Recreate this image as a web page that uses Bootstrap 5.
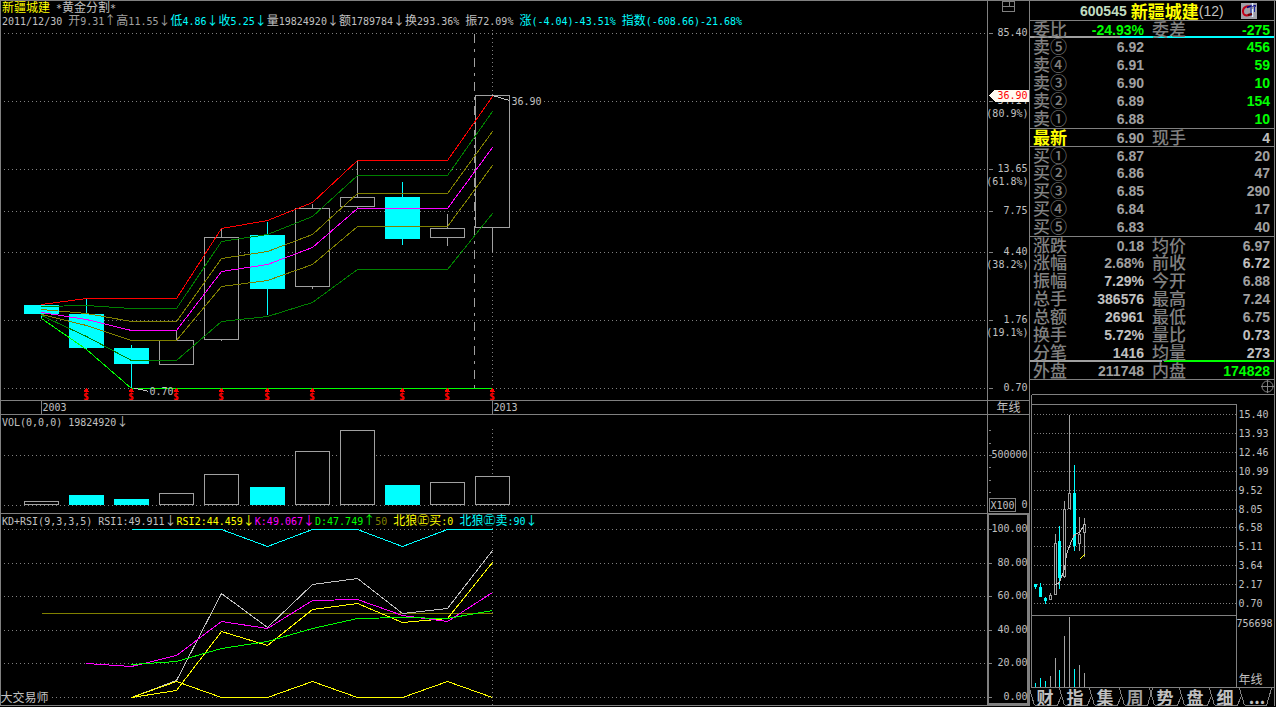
<!DOCTYPE html>
<html lang="zh-CN" data-bs-theme="dark">
<head>
<meta charset="utf-8">
<meta name="viewport" content="width=device-width, initial-scale=1">
<title>新疆城建 600545 年线</title>
<link href="https://cdn.jsdelivr.net/npm/bootstrap@5.3.0/dist/css/bootstrap.min.css" rel="stylesheet">
<style>
:root{--line:#808080;--txt:#c0c0c0;--dim:#a0a0a0;--up:#00ff00;--cy:#00ffff}
body{background:#000;color:var(--txt);font:10px/12px "DejaVu Sans Mono","Noto Sans CJK SC",monospace}
.cjk{font:12px/12px "Noto Sans CJK SC",sans-serif}
.edge-t{border-top:1px solid var(--line)}
.edge-l{border-left:1px solid var(--line)}
.edge-b{border-bottom:1px solid var(--line)}
.edge-r{border-right:1px solid var(--line)}
.axis-col{width:42px;flex:none}
.side-col{width:247px;flex:none}
.side-in{width:245px}
.head-row{height:14px;padding-left:1px;white-space:pre;line-height:12px}
.head-title{height:13px}
svg{display:block;width:100%}
svg text{fill:var(--txt);font:10px "DejaVu Sans Mono",monospace;white-space:pre}
svg text .cjk,svg text.cjk{font:12px "Noto Sans CJK SC",sans-serif}
.axis-col svg{overflow:visible}
.h-price{height:372px}.h-price-axis{height:399px}
.h-date{height:13px}
.h-vol{height:84px}.h-vol-axis{height:98px}
.h-kd{height:177px}.h-kd-axis{height:191px}
.kd-axis{border:2px solid var(--line);border-top-width:1px}
.c-y{color:#ffff00}.c-c{color:var(--cy)}.c-m{color:#ff00ff}.c-g{color:var(--up)}.c-o{color:#808000}.c-d{color:var(--dim)}
.stock-head{height:19px;font:bold 14px/18px "Liberation Sans",Arial,sans-serif;padding-left:50px}
.stock-head h1{font:bold 17px/18px "Noto Sans CJK SC",sans-serif;margin:0 0 0 4px;color:#ffff00}
.code{color:#c0dcc0}
.logo{width:16px;height:16px;margin-left:17px}
.quote{width:100%;border-collapse:separate;border-spacing:0;table-layout:fixed;font:bold 14px/16px "Liberation Sans",Arial,sans-serif}
.quote tr{height:18px}
.quote th,.quote td{padding:0;height:18px;line-height:16px;vertical-align:middle}
.quote th{font:500 17px/14px "Noto Sans CJK SC",sans-serif;color:var(--line);white-space:nowrap;padding:0 0 2px 3px}
.quote td{text-align:right}
.quote td+th{padding-left:8px}
.quote td:last-child{padding-right:4px}
.quote tr.ruled>*{border-top:1px solid var(--line)}
.quote tr.closing>*{border-bottom:1px solid var(--line)}
.quote td.lo{color:var(--dim)}.quote td.dn{color:var(--up)}
.quote th.hot{color:#ffff00;font-weight:700}
.bar-ask{background:linear-gradient(90deg,var(--dim) 37%,var(--cy) 37%) bottom/100% 2px no-repeat}
.bar-vol{background:linear-gradient(90deg,var(--dim) 54%,#000 54%,#000 55%,var(--up) 55%) bottom/100% 2px no-repeat}
.target-strip{height:14px}
.target-strip svg{width:13px;height:13px}
.h-mini{height:293px}
.tab-strip{height:19px}
.tab-strip>svg{height:19px;left:0;top:0}
.tab-strip button{width:30px;padding:0;border:0;background:none;color:var(--txt);font:bold 17px/17px "Noto Sans CJK SC",sans-serif;position:relative}
.tab-strip button.on{color:var(--dim)}
.tab-strip button.more{width:34px}
</style>
</head>
<body>
<div class="d-flex min-vh-100 align-items-start">
  <main class="flex-grow-1 edge-l edge-t edge-b" style="min-width:0">
    <section class="d-flex">
      <div class="flex-grow-1 overflow-hidden">
        <div class="head-row head-title"><span class="cjk c-y">新疆城建</span> *<span class="cjk">黄金分割</span>*</div>
        <div class="head-row">2011/12/30 <span class="c-d"><span class="cjk">开</span>9.31<span class="cjk">↑高</span>11.55<span class="cjk">↓</span></span><span class="c-c"><span class="cjk">低</span>4.86<span class="cjk">↓收</span>5.25<span class="cjk">↓</span></span><span class="cjk">量</span>19824920<span class="cjk">↓额</span>1789784<span class="cjk">↓换</span>293.36% <span class="cjk">振</span>72.09% <span class="c-c"><span class="cjk">涨</span>(-4.04)-43.51% <span class="cjk">指数</span>(-608.66)-21.68%</span></div>
        <svg class="h-price" id="price"></svg>
      </div>
      <div class="axis-col edge-l"><svg class="h-price-axis" id="priceAxis"></svg></div>
    </section>
    <section class="d-flex edge-t">
      <div class="flex-grow-1 overflow-hidden"><svg class="h-date" id="dates"></svg></div>
      <div class="axis-col edge-l text-center cjk h-date">年线</div>
    </section>
    <section class="d-flex edge-t">
      <div class="flex-grow-1 overflow-hidden">
        <div class="head-row">VOL(0,0,0) 19824920<span class="cjk">↓</span></div>
        <svg class="h-vol" id="vol"></svg>
      </div>
      <div class="axis-col edge-l"><svg class="h-vol-axis" id="volAxis"></svg></div>
    </section>
    <section class="d-flex edge-t">
      <div class="flex-grow-1 overflow-hidden">
        <div class="head-row">KD+RSI(9,3,3,5) RSI1:49.911<span class="cjk">↓</span><span class="c-y">RSI2:44.459<span class="cjk">↓</span></span><span class="c-m">K:49.067<span class="cjk">↓</span></span><span class="c-g">D:47.749<span class="cjk">↑</span></span><span class="c-o">50</span> <span class="c-y"><span class="cjk">北狼㊣买</span>:0</span> <span class="c-c"><span class="cjk">北狼㊣卖</span>:90<span class="cjk">↓</span></span></div>
        <svg class="h-kd" id="kd"></svg>
      </div>
      <div class="axis-col kd-axis h-kd-axis"><svg class="h-100" id="kdAxis"></svg></div>
    </section>
  </main>

  <aside class="side-col edge-l edge-t">
    <div class="side-in edge-r">
      <div class="stock-head d-flex align-items-center">
        <span class="code">600545</span><h1>新疆城建</h1><span class="fw-normal">(12)</span>
        <svg class="logo" viewBox="0 0 16 16" aria-hidden="true"><rect width="16" height="16" fill="#a0a0a8"/><path d="M9 3.500C5 2.500 1.500 5 2 9s4 4 7 2.500" fill="none" stroke="#c00018" stroke-width="2"/><path d="M6 4.500l5-2 4 .5" fill="none" stroke="#000080" stroke-width="1.500"/><path d="M11.500 0v3M11.500 6v8" stroke="#e0f0ff" stroke-width="1.500"/><path d="M10 4v9M13.500 4v5" stroke="#1020a0"/><path d="M7 12l4-1" stroke="#660000" stroke-width="2"/></svg>
      </div>
      <table class="quote">
        <colgroup><col style="width:40px"><col style="width:74px"><col style="width:48px"><col></colgroup>
        <tbody>
        <tr class="ruled bar-ask"><th>委比</th><td class="dn">-24.93%</td><th>委差</th><td class="dn">-275</td></tr>
        <tr><th>卖⑤</th><td class="lo">6.92</td><td colspan="2" class="dn">456</td></tr>
        <tr><th>卖④</th><td class="lo">6.91</td><td colspan="2" class="dn">59</td></tr>
        <tr><th>卖③</th><td class="lo">6.90</td><td colspan="2" class="dn">10</td></tr>
        <tr><th>卖②</th><td class="lo">6.89</td><td colspan="2" class="dn">154</td></tr>
        <tr><th>卖①</th><td class="lo">6.88</td><td colspan="2" class="dn">10</td></tr>
        <tr class="ruled"><th class="hot">最新</th><td class="lo">6.90</td><th>现手</th><td>4</td></tr>
        <tr class="ruled"><th>买①</th><td class="lo">6.87</td><td colspan="2" class="lo">20</td></tr>
        <tr><th>买②</th><td class="lo">6.86</td><td colspan="2" class="lo">47</td></tr>
        <tr><th>买③</th><td class="lo">6.85</td><td colspan="2" class="lo">290</td></tr>
        <tr><th>买④</th><td class="lo">6.84</td><td colspan="2" class="lo">17</td></tr>
        <tr><th>买⑤</th><td class="lo">6.83</td><td colspan="2" class="lo">40</td></tr>
        <tr class="ruled"><th>涨跌</th><td class="lo">0.18</td><th>均价</th><td class="lo">6.97</td></tr>
        <tr><th>涨幅</th><td class="lo">2.68%</td><th>前收</th><td>6.72</td></tr>
        <tr><th>振幅</th><td>7.29%</td><th>今开</th><td class="lo">6.88</td></tr>
        <tr><th>总手</th><td>386576</td><th>最高</th><td class="lo">7.24</td></tr>
        <tr><th>总额</th><td>26961</td><th>最低</th><td class="lo">6.75</td></tr>
        <tr><th>换手</th><td>5.72%</td><th>量比</th><td>0.73</td></tr>
        <tr class="bar-vol"><th>分笔</th><td>1416</th><th>均量</th><td>273</td></tr>
        <tr class="closing"><th>外盘</th><td class="lo">211748</td><th>内盘</th><td class="dn">174828</td></tr>
        </tbody>
      </table>
      <div class="target-strip d-flex justify-content-end"><svg viewBox="0 0 13 13" aria-hidden="true"><circle cx="6.5" cy="6.5" r="5.5" fill="none" stroke="#808080"/><path d="M6.500 0v13M0 6.500h13" stroke="#808080"/></svg></div>
      <svg class="h-mini" id="mini"></svg>
      <nav class="tab-strip d-flex position-relative">
        <svg class="position-absolute" id="tabs" aria-hidden="true"></svg>
        <button>财</button><button>指</button><button>集</button><button class="on">周</button><button>势</button><button>盘</button><button>细</button><button class="more">...</button>
      </nav>
    </div>
  </aside>
</div>
<script src="https://cdn.jsdelivr.net/npm/bootstrap@5.3.0/dist/js/bootstrap.bundle.min.js"></script>
<script>
const G='#808080',H='#a0a0a0',C='#00ffff',W='#c0c0c0',Y='#ffff00',M='#ff00ff',L='#00ff00',D='#008000',O='#808000',R='#ff0000';
const years=[41,86,131,176,221,267,312,357,402,447,492];
// Each panel draws in shared screen units; ox, oy is the panel's own origin.
function panel(id,ox,oy,body){
  document.getElementById(id).innerHTML='<g shape-rendering="crispEdges" transform="translate('+(0.5-ox)+','+(0.5-oy)+')">'+body+'</g>';
}
const line=(x1,y1,x2,y2,c=G,x='')=>`<line x1="${x1}" y1="${y1}" x2="${x2}" y2="${y2}" stroke="${c}" ${x}/>`;
const dotH=(y,x1=4,x2=4000,d='1 3')=>line(x1-.5,y,x2,y,G,`stroke-dasharray="${d}"`);
const dotV=(x,y1,y2)=>line(x,y1-.5,x,y2,G,'stroke-dasharray="1 3"');
const poly=(pts,c)=>`<polyline points="${pts.map(p=>p.join()).join(' ')}" fill="none" stroke="${c}"/>`;
const series=(ys,c,from=0)=>poly(ys.map((y,i)=>[years[i+from],y]),c);
const box=(x,y,w,h,c,f='#000')=>`<rect x="${x}" y="${y}" width="${w}" height="${h}" fill="${f}" stroke="${c}"/>`;
const txt=(x,y,s,a='start',x2='')=>`<text x="${x}" y="${y}" text-anchor="${a}" ${x2}>${s}</text>`;

// yearly candles: high, body top, body bottom, low, falling?
const candles=[[305,305,313,318,1],[298,314,347,349,1],[344,348,363,388,1],[329,340,364,364,0],[228,237,339,340,0],[221,235,288,314,1],[203,208,286,288,0],[160,197,206,207,0],[181,197,238,244,1],[213,228,237,245,0],[95,95,227,252,0]];
let s=[33,101,169,211,252,320,388].map(y=>dotH(y)).join('');
s+=line(474,33,474,387,H,'stroke-dasharray="9 6 3 6"')+dotV(492,30,95)+dotV(492,252,390);
candles.forEach(([h,t,b,l,f],i)=>{const x=years[i],c=f?C:H;
  s+=box(x-17,t,34,b-t,c,f?C:'#000')+line(x,h,x,t,c)+line(x,b,x,l+.5,c);});
s+=series([315,336,360,360,321,316,302,269,269,269,213],D)+series([306,305,308,308,241,234,216,175,175,175,111],D)
 +series([309,313,321,321,258,251,234,193,193,193,131],O)+series([314,325,340,340,286,280,264,226,226,226,165],O)
 +series([312,319,330,330,271,264,247,208,208,208,147],M)+series([304,298,298,298,228,220,202,160,160,160,96],R)
 +series([318,349,388,388,388,388,388,388,388,388,388],L);
s+=line(492,95,509,100,W)+`<rect x="511" y="96" width="31" height="10" fill="#000"/>`+txt(511,104,'36.90')
 +poly([[134,388],[141,389],[148,391]],W)+txt(149,394,'0.70');
[86,131,176,221,267,312,402,447,492].forEach(x=>{s+=txt(x-.5,399,'$','middle','style="fill:#f00;font-weight:700"')+`<path d="M${x-3} 391l3-4 2 4z" fill="#f00"/>`;});
panel('price',1,28,s);

s='';[[33,'85.40'],[101,'34.14','(80.9%)'],[169,'13.65','(61.8%)'],[211,'7.75'],[252,'4.40','(38.2%)'],[320,'1.76','(19.1%)'],[388,'0.70']].forEach(([y,a,p])=>{
  s+=line(988,y,992,y)+txt(1027,y+2,a,'end')+(p?txt(1028,y+15,p,'end'):'');});
s+='<path d="M988 95l6-6h34v12h-34z" fill="#fffaf0"/>'+txt(1027,98,'36.90','end','style="fill:#f00"');
s+=box(1002,1,12,10,G)+line(1009,1,1009,6)+line(1002,6,1014,6);
panel('priceAxis',988,1,s);

panel('dates',1,401,line(41,400,41,414)+line(492,400,492,414)+txt(42,410,'2003')+txt(493,410,'2013'));

s=dotH(455)+dotH(505)+dotV(492,429,512);
[501,495,499,493,474,487,451,430,485,482,476].forEach((t,i)=>{const f=i>0&&candles[i][4];s+=box(years[i]-17,t,34,504-t,f?C:H,f?C:'#000');});
panel('vol',1,429,s);
s=line(988,455,991,455)+[430,443,467,480,492].map(y=>line(988,y,990,y)).join('')+txt(1027,457,'500000','end')+txt(1027,507,'0','end')+box(989,498,26,13,G)+txt(990,508,'X100');
panel('volAxis',988,415,s);

s=[529,563,596,630,663].map(y=>dotH(y)).join('')+dotH(697,52)+dotV(492,528,706)
 +line(41,613,492,613,O)
 +series([529,529,529,546,529,529,546,529,529],C,2)
 +series([697,680,593,627,584,578,613,608,550],W,2)
 +series([697,690,631,645,609,603,622,618,562],Y,2)
 +series([663,666,655,621,628,600,599,615,621,592],M,1)
 +series([664,661,648,641,628,618,617,618,610],L,2)
 +series([697,681,697,697,681,697,697,681,697],Y,2)
 +txt(0,701,'大交易师','start','class="cjk"');
panel('kd',1,528,s);
s='';[[529,'100.00'],[563,'80.00'],[596,'60.00'],[630,'40.00'],[663,'20.00'],[697,'0.00']].forEach(([y,t])=>{s+=line(988,y,991,y)+txt(1027,y+2,t,'end');});
panel('kdAxis',989,515,s);

// overview chart beside the quote table
s=line(1031,394,1400,394)+line(1031,394,1031,687)+line(1031,404,1236,404)+line(1236,404,1236,687)+line(1031,615,1236,615);
[15.40,13.93,12.46,10.99,9.52,8.05,6.58,5.11,3.64,2.17,0.70].forEach((v,i)=>{const y=414+Math.round(i*18.9);s+=dotH(y,1034,1236,'1 2')+txt(1238,y+3,v.toFixed(2));});
[[1035,584,584,586,588,1,682],[1040,582,587,596,596,1,677],[1045,596,598,600,603,1,680],[1050,592,595,599,599,0,675],[1055,533,543,594,594,0,657],[1059,525,541,577,588,1,669],[1064,500,509,576,577,0,635],[1069,414,493,508,508,0,616],[1074,464,493,545,550,1,668],[1079,516,534,543,550,0,664],[1084,517,524,532,556,0,672]]
.forEach(([x,h,t,b,l,f,v])=>{const c=f?C:H;s+=box(x-1,t,2,b-t,c,f?C:'#000')+line(x,h,x,t,c)+line(x,b,x,l+.5,c)+line(x,v,x,686,c);});
s+=poly([[1055,584],[1059,582],[1064,568],[1066,554],[1070,543],[1074,534],[1079,532],[1084,524]],W)+poly([[1079,559],[1084,554]],Y);
s+=txt(1236,626,'756698')+txt(1238,683,'年线','start','class="cjk"')+line(1030,687,1400,687,G,'stroke-width="2"');
panel('mini',1030,394,s);

s=line(1030,687,1400,687);
for(let i=0;i<8;i++){const x=1029+i*30;s+=line(x,688,x+5,705)+line(x+5,705,i<7?x+28:1266,705);
  if(i<7)s+=i==3?line(x+28,705,x+33,688):line(x+28,705,x+31,697);}
s+=line(1266,705,1271,688);
panel('tabs',1030,687,s);
</script>
</body>
</html>
